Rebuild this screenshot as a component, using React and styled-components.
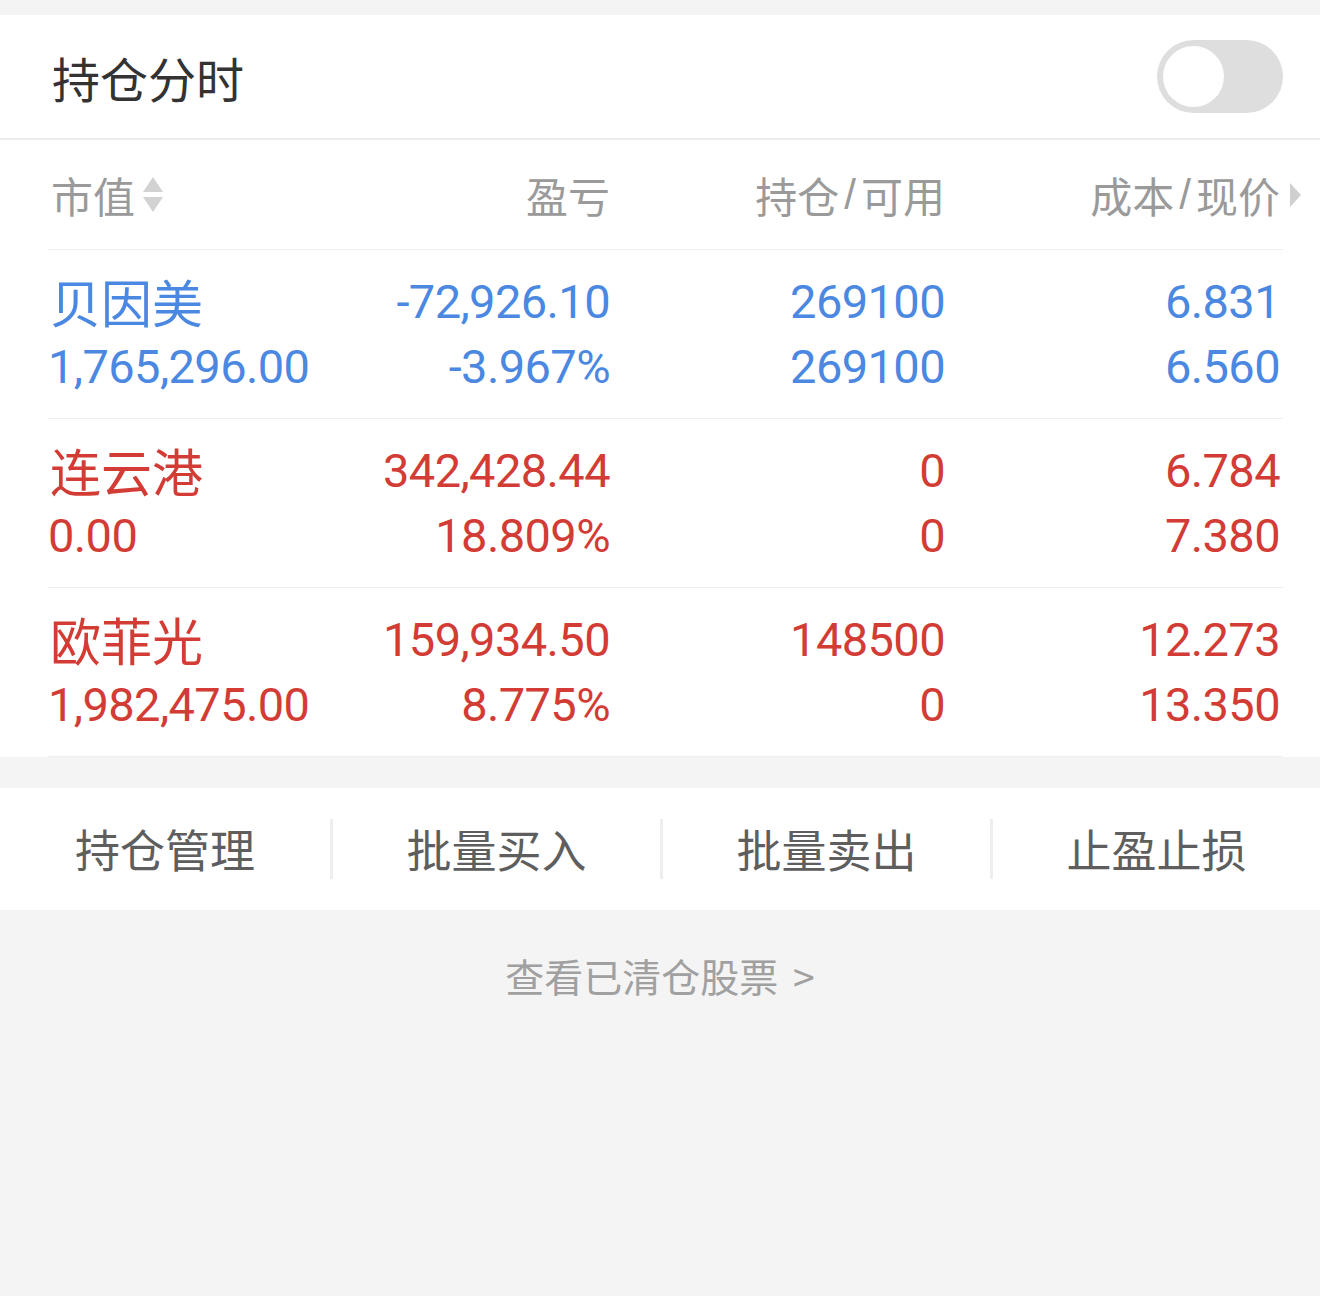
import styled, { createGlobalStyle } from "styled-components";

const GlobalStyle = createGlobalStyle`
    body {
        margin: 0;
        background: #f4f4f4;
        font-family: "Noto Sans CJK SC", "Noto Sans", sans-serif;
    }
`;

const BLUE = "#4a88e2";
const RED = "#d33c35";
const NUM_FONT = `"Roboto", "Noto Sans CJK SC", sans-serif`;

const StPage = styled.div`
    min-height: 1296px;
    padding-top: 15px;
    box-sizing: border-box;
    background: #f4f4f4;
`;
const StCard = styled.section`
    background: #fff;
`;
const StTitleBar = styled.div`
    display: flex;
    align-items: center;
    justify-content: space-between;
    height: 123px;
    padding: 0 37px 0 52px;
    border-bottom: 2px solid #ececec;
`;
const StTitle = styled.h2`
    margin: 0;
    font-size: 48px;
    font-weight: 400;
    color: #333;
`;
const StToggle = styled.div`
    display: flex;
    align-items: center;
    width: 126px;
    height: 73px;
    padding: 0 6px;
    box-sizing: border-box;
    border-radius: 37px;
    background: #dedede;
`;
const StKnob = styled.div`
    width: 61px;
    height: 61px;
    border-radius: 50%;
    background: #fff;
`;
const StTable = styled.div`
    padding: 0 37px 0 48px;
`;
const StGrid = styled.div`
    display: grid;
    grid-template-columns: 282px 280px 335px 1fr;
    align-items: center;
    height: ${(p) => p.$height}px;
    border-bottom: 1px solid #efefef;
    box-sizing: border-box;
`;
const StHeadCell = styled.div`
    position: relative;
    display: flex;
    align-items: center;
    justify-content: ${(p) => (p.$left ? "flex-start" : "flex-end")};
    padding-left: ${(p) => (p.$left ? "3px" : "0")};
    padding-right: ${(p) => (p.$right ? "3px" : "0")};
    font-size: 42px;
    color: #9a9a9a;
`;
const StSlash = styled.span`
    margin: 0 5px;
    font-family: "Liberation Sans", sans-serif;
`;
const StSortIcon = styled.svg`
    margin-left: 7px;
    width: 22px;
    height: 38px;
`;
const StMore = styled.svg`
    position: absolute;
    right: -18px;
    top: 50%;
    width: 11px;
    height: 24px;
    margin-top: -12px;
`;
const StCell = styled.div`
    display: flex;
    flex-direction: column;
    align-items: ${(p) => (p.$left ? "flex-start" : "flex-end")};
    padding-right: ${(p) => (p.$right ? "3px" : "0")};
    color: ${(p) => p.$color};
`;
const StName = styled.div`
    height: 65px;
    line-height: 65px;
    padding-left: 2px;
    font-size: 51px;
`;
const StNum = styled.div`
    height: 65px;
    line-height: 65px;
    font-family: ${NUM_FONT};
    font-size: 47px;
    letter-spacing: -0.6px;
`;
const StActionBar = styled.div`
    display: grid;
    grid-template-columns: repeat(4, 1fr);
    align-items: center;
    height: 122px;
    margin-top: 31px;
    background: #fff;
`;
const StAction = styled.div`
    height: 60px;
    line-height: 60px;
    text-align: center;
    font-size: 45px;
    color: #5e5e5e;

    & + & {
        border-left: 3px solid #eeeeee;
    }
`;
const StFooterLink = styled.div`
    margin-top: 41px;
    text-align: center;
    font-size: 39px;
    line-height: 48px;
    color: #a0a0a0;
    word-spacing: 6px;
`;

const rows = [
    {
        name: "贝因美",
        color: BLUE,
        value: "1,765,296.00",
        pl: "-72,926.10",
        plPct: "-3.967%",
        hold: "269100",
        avail: "269100",
        cost: "6.831",
        price: "6.560",
    },
    {
        name: "连云港",
        color: RED,
        value: "0.00",
        pl: "342,428.44",
        plPct: "18.809%",
        hold: "0",
        avail: "0",
        cost: "6.784",
        price: "7.380",
    },
    {
        name: "欧菲光",
        color: RED,
        value: "1,982,475.00",
        pl: "159,934.50",
        plPct: "8.775%",
        hold: "148500",
        avail: "0",
        cost: "12.273",
        price: "13.350",
    },
];

const actions = ["持仓管理", "批量买入", "批量卖出", "止盈止损"];

export default function App() {
    return (
        <>
            <GlobalStyle />
            <StPage>
                <StCard>
                    <StTitleBar>
                        <StTitle>持仓分时</StTitle>
                        <StToggle>
                            <StKnob />
                        </StToggle>
                    </StTitleBar>
                    <StTable>
                        <StGrid $height={110}>
                            <StHeadCell $left>
                                市值
                                <StSortIcon viewBox="0 0 22 38">
                                    <path d="M11 1 L21 16 L1 16 Z" fill="#d2d2d2" />
                                    <path d="M1 21 L21 21 L11 36 Z" fill="#d2d2d2" />
                                </StSortIcon>
                            </StHeadCell>
                            <StHeadCell>盈亏</StHeadCell>
                            <StHeadCell>
                                持仓<StSlash>/</StSlash>可用
                            </StHeadCell>
                            <StHeadCell $right>
                                成本<StSlash>/</StSlash>现价
                                <StMore viewBox="0 0 11 24">
                                    <path d="M0 0 L11 12 L0 24 Z" fill="#cfcfcf" />
                                </StMore>
                            </StHeadCell>
                        </StGrid>
                        {rows.map((r) => (
                            <StGrid key={r.name} $height={169}>
                                <StCell $left $color={r.color}>
                                    <StName>{r.name}</StName>
                                    <StNum>{r.value}</StNum>
                                </StCell>
                                <StCell $color={r.color}>
                                    <StNum>{r.pl}</StNum>
                                    <StNum>{r.plPct}</StNum>
                                </StCell>
                                <StCell $color={r.color}>
                                    <StNum>{r.hold}</StNum>
                                    <StNum>{r.avail}</StNum>
                                </StCell>
                                <StCell $right $color={r.color}>
                                    <StNum>{r.cost}</StNum>
                                    <StNum>{r.price}</StNum>
                                </StCell>
                            </StGrid>
                        ))}
                    </StTable>
                </StCard>
                <StActionBar>
                    {actions.map((a) => (
                        <StAction key={a}>{a}</StAction>
                    ))}
                </StActionBar>
                <StFooterLink>查看已清仓股票 &gt;</StFooterLink>
            </StPage>
        </>
    );
}
